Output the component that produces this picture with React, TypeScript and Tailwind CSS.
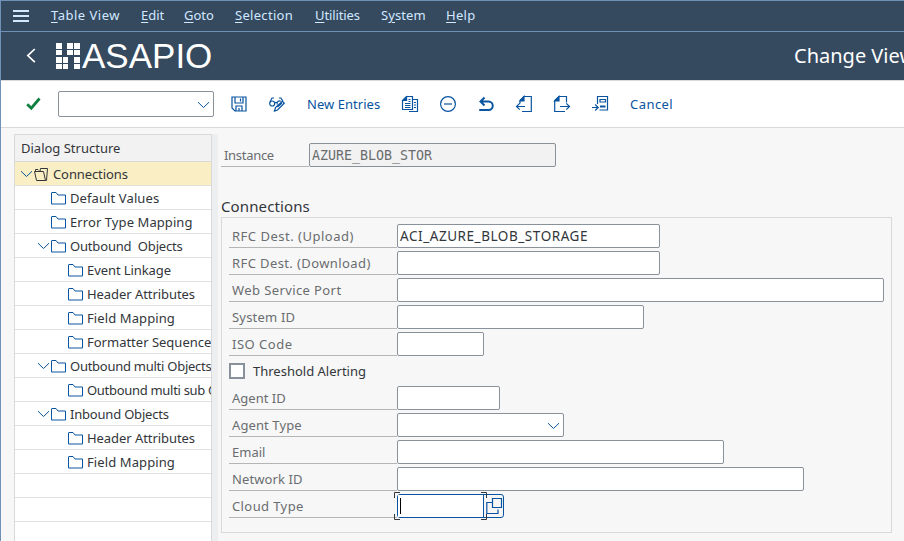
import type { ReactNode } from 'react'

interface MenuItem {
  key: string
  before?: string
  rest: string
  className: string
}

interface TreeRow {
  label: string
  className?: string
  level: 'root' | 'group' | 'child' | 'leaf'
}

interface Field {
  label: string
  labelClass: string
  inputClass: string
  value?: string
}

const menuItems: MenuItem[] = [
  { key: 'T', rest: 'able View', className: 'w-[90px] tracking-[0.5px]' },
  { key: 'E', rest: 'dit', className: 'w-[43px]' },
  { key: 'G', rest: 'oto', className: 'w-[51px]' },
  { key: 'S', rest: 'election', className: 'w-[80px] tracking-[0.3px]' },
  { key: 'U', rest: 'tilities', className: 'w-[66px] tracking-[-0.1px]' },
  { before: 'S', key: 'y', rest: 'stem', className: 'w-[65px] tracking-[0.1px]' },
  { key: 'H', rest: 'elp', className: 'w-[40px] tracking-[0.3px]' },
]

const treeRows: TreeRow[] = [
  { label: 'Connections', level: 'root', className: 'tracking-[-0.1px]' },
  { label: 'Default Values', level: 'child', className: 'tracking-[0.1px]' },
  { label: 'Error Type Mapping', level: 'child', className: 'tracking-[0.08px]' },
  { label: 'Outbound  Objects', level: 'group', className: 'tracking-[-0.17px]' },
  { label: 'Event Linkage', level: 'leaf', className: 'tracking-[-0.08px]' },
  { label: 'Header Attributes', level: 'leaf', className: 'tracking-[-0.06px]' },
  { label: 'Field Mapping', level: 'leaf', className: 'tracking-[0.1px]' },
  { label: 'Formatter Sequence', level: 'leaf' },
  { label: 'Outbound multi Objects', level: 'group', className: 'tracking-[-0.26px]' },
  { label: 'Outbound multi sub Objects', level: 'leaf', className: 'tracking-[-0.3px]' },
  { label: 'Inbound Objects', level: 'group', className: 'tracking-[-0.2px]' },
  { label: 'Header Attributes', level: 'leaf', className: 'tracking-[-0.06px]' },
  { label: 'Field Mapping', level: 'leaf', className: 'tracking-[0.1px]' },
]

const upperFields: Field[] = [
  { label: 'RFC Dest. (Upload)', labelClass: 'tracking-[0.5px]', inputClass: 'w-[263px]', value: 'ACI_AZURE_BLOB_STORAGE' },
  { label: 'RFC Dest. (Download)', labelClass: 'tracking-[0.4px]', inputClass: 'w-[263px]' },
  { label: 'Web Service Port', labelClass: 'tracking-[0.4px]', inputClass: 'w-[487px]' },
  { label: 'System ID', labelClass: 'tracking-[0.2px]', inputClass: 'w-[247px]' },
  { label: 'ISO Code', labelClass: 'tracking-[0.5px]', inputClass: 'w-[87px]' },
]

const indent = {
  root: 'pl-[5px]',
  group: 'pl-[22px]',
  child: 'pl-[36px]',
  leaf: 'pl-[53px]',
}

function Chevron({ className = '' }: { className?: string }) {
  return (
    <svg className={`shrink-0 ${className}`} width="14" height="8" viewBox="0 0 14 8" fill="none" stroke="#0854a0">
      <path d="M1 1.200 6.500 6.500 12 1.200" />
    </svg>
  )
}

function Folder() {
  return (
    <svg className="shrink-0" width="16" height="14" viewBox="0 0 16 14" fill="none" stroke="#0854a0">
      <path d="M.5 13V2Q.5 1.5 1 1.5H5l2 2.500h7.500v9z" />
    </svg>
  )
}

function OpenFolder() {
  return (
    <svg className="shrink-0" width="16" height="14" viewBox="0 0 16 14" fill="none" stroke="#32363a">
      <path d="M2.500 13.500.500 4.500H9.500L11.500 13.500zM1.500 4.500v-2H4l1 1M6 4.500l.500-3h7L12.500 13.500h-1" />
    </svg>
  )
}

function ToolIcon({ children, className = 'w-[38px]' }: { children: ReactNode; className?: string }) {
  return (
    <button className={`shrink-0 ${className}`}>
      <svg width="18" height="18" viewBox="0 0 18 18" fill="none" stroke="#0854a0" strokeWidth="1.2">
        {children}
      </svg>
    </button>
  )
}

function FormRow({ label, labelClass = '', children }: { label: string; labelClass?: string; children: ReactNode }) {
  return (
    <div className="flex h-6">
      <label className="w-[168px] shrink-0 border-b border-[#b5b5b5] pl-[3px] leading-6 text-[#6a6d70]">
        <span className={labelClass}>{label}</span>
      </label>
      {children}
    </div>
  )
}

function TextBox({ className, value }: { className: string; value?: string }) {
  return (
    <div className={`h-6 shrink-0 rounded-[2px] border border-[#89919a] bg-white pl-[2px] leading-[22px] ${className}`}>
      {value && <span className="text-[13.5px] tracking-[0.56px]">{value}</span>}
    </div>
  )
}

function Logo() {
  return (
    <div className="flex h-[48px]">
      <svg className="mt-[11px]" width="26" height="27" viewBox="0 0 26 27" fill="#fff">
        <path d="M0 0h6v6H0zM11 0h6v6h-6zM18 0h6v6h-6zM0 7h6v5H0zM11 7h6v5h-6zM18 7h6v5h-6zM0 14h6v6H0zM7 14h5v6H7zM18 14h6v6h-6zM0 21h6v5H0zM7 21h5v5H7zM18 21h6v5h-6z" />
      </svg>
      <span className="font-['Liberation_Sans',sans-serif] text-[35px] leading-[48px] text-white">ASAPIO</span>
    </div>
  )
}

function Toolbar() {
  return (
    <div className="flex h-[47px] items-center border-b border-[#d9d9d9] bg-white pl-[25px] text-[#0854a0]">
      <svg width="15" height="14" viewBox="0 0 15 14" fill="none" stroke="#107e3e" strokeWidth="2.8">
        <path d="M1.200 7.200 5.300 11.200 13.500 1.500" />
      </svg>
      <div className="ml-[17px] mr-[16px] flex h-[26px] w-[156px] shrink-0 items-center justify-end rounded-[2px] border border-[#89919a] pr-[2px]">
        <Chevron className="mt-[2px]" />
      </div>
      <ToolIcon>
        <path d="M2 2h14v14H5l-3-3zM5 2v6h8V2M6 16v-5h6v5M9 13v3M10.5 3.5v3" />
      </ToolIcon>
      <ToolIcon className="w-[39px]">
        <circle cx="4.200" cy="8.500" r="2.500" />
        <path d="M6.700 8q1-1.300 2.500-.300M1.800 7.500 4 3h2M15 6.500 13 3h-2M9.300 9.500a2.500 2.500 0 0 1 3.500-3.300M6.500 16l1-3.500 6.800-6.200 2 2L9.500 15zM9.500 12l4.500-4" />
      </ToolIcon>
      <span className="w-[94px] shrink-0 whitespace-nowrap tracking-[0.04px]">New Entries</span>
      <ToolIcon>
        <path d="M1.500 5.500v9h10v-13h-6zM5.500 1.500v4h-4M4 8.500h5.500M4 10.500h5.500M4 12.500h5.500M7.500 4.500h2M7.500 6.500h2M11.500 4.500h5v12H8M13 7.500h2M13 10h2M13 12.500h2" />
        <path d="M2 5.500 5.500 2v3.500z" fill="#0854a0" />
      </ToolIcon>
      <ToolIcon>
        <circle cx="9" cy="9" r="7.400" />
        <path d="M5 9h8" />
      </ToolIcon>
      <ToolIcon>
        <path strokeWidth="2" d="M7.500 2.500 3.500 6.500l4 4M3.500 6.500h8a4.100 4.100 0 0 1 0 8.500H2.200" />
      </ToolIcon>
      <ToolIcon>
        <path d="M5 5.500 9 1.500h7.300v15H7M5 5.500v3M1.500 11.500H10M4.700 8.300 1.500 11.500l3.200 3.200" />
        <path d="M5 6 9 1.500V6z" fill="#0854a0" />
      </ToolIcon>
      <ToolIcon>
        <path d="M13.500 7.500v-6H6L1.700 5.500v11H12M7 11.500h9.500M13.300 8.300l3.200 3.200-3.200 3.200" />
        <path d="M1.700 6 6 1.500V6z" fill="#0854a0" />
      </ToolIcon>
      <ToolIcon className="w-[39px]">
        <path d="M6.500 9V1.500h10v13.500h-8M9 4.500h5.500v2.500H9zM1 12.500h6M4.200 9.500l3 3-3 3" />
        <path d="M9 11.500h5.500" strokeWidth="2" />
      </ToolIcon>
      <span className="tracking-[0.45px]">Cancel</span>
    </div>
  )
}

function DialogStructure() {
  return (
    <aside className="mt-[6px] w-[198px] shrink-0 overflow-hidden border-x border-t border-[#d9d9d9] bg-white text-[#32363a]">
      <div className="h-[27px] border-b border-[#d9d9d9] bg-[#f2f2f2] pl-[6px] leading-[27px]">
        <span>Dialog Structure</span>
      </div>
      {treeRows.map((row, i) => (
        <div
          key={i}
          className={`flex h-6 items-center overflow-hidden whitespace-pre border-b border-[#e0e0e0] ${indent[row.level]} ${row.level === 'root' ? 'bg-[#f9eec4]' : ''}`}
        >
          {(row.level === 'root' || row.level === 'group') && <Chevron />}
          {row.level === 'root' ? <OpenFolder /> : <Folder />}
          <span className={`ml-[3px] ${row.className ?? ''}`}>{row.label}</span>
        </div>
      ))}
      <div className="h-6 border-b border-[#e0e0e0]" />
      <div className="h-6 border-b border-[#e0e0e0]" />
    </aside>
  )
}

function CloudTypeInput() {
  return (
    <div className="relative flex h-6 w-[107px] rounded-[3px] border border-[#0854a0] bg-[#f7f7f7]">
      <div className="flex w-[86px] items-center border-r border-[#0854a0] bg-white pl-[2px]">
        <span className="h-4 w-px bg-black" />
      </div>
      <svg className="ml-[2px] mt-[2px]" width="17" height="18" viewBox="0 0 17 18" fill="none" stroke="#0854a0" strokeWidth="1.2">
        <path d="M6.500 1.500h9v9h-9zM6.500 5.500H.800v11H12v-4" />
      </svg>
      <svg className="absolute -left-[4px] -top-[3px]" width="94" height="28" viewBox="0 0 94 28" fill="none" stroke="#32363a">
        <path d="M6 .5H.5V6M87 .5h5.500V6M6 27.500H.5V22M87 27.500h5.500V22" />
      </svg>
    </div>
  )
}

export default function App() {
  return (
    <div className="flex h-[541px] w-[904px] flex-col overflow-hidden border-l border-t border-[#6e91b5] bg-[#f7f7f7] font-['Noto_Sans',sans-serif] text-[13px] leading-5">
      <nav className="flex h-[31px] shrink-0 items-center border-b border-[#6e91b5] bg-[#354a5f] pb-[2px] pl-[12px] text-[#d1e8ff]">
        <svg className="mr-[22px] mt-[2px]" width="16" height="12" viewBox="0 0 16 12" fill="#d1e8ff">
          <path d="M0 0h16v2H0zM0 5h16v2H0zM0 10h16v2H0z" />
        </svg>
        {menuItems.map((item) => (
          <span key={item.key} className={`shrink-0 whitespace-nowrap ${item.className}`}>
            {item.before}
            <span className="underline underline-offset-2">{item.key}</span>
            {item.rest}
          </span>
        ))}
      </nav>
      <header className="flex h-[49px] shrink-0 border-b border-[#d9d9d9] bg-[#354a5f]">
        <svg className="ml-[25px] mr-[18px] mt-[16px]" width="12" height="16" viewBox="0 0 12 16" fill="none" stroke="#fff" strokeWidth="1.7">
          <path d="M8.800 1 1.800 7.600l7 6.600" />
        </svg>
        <Logo />
        <h1 className="ml-auto w-[110px] whitespace-nowrap text-[20px] leading-[48px] text-white">Change View</h1>
      </header>
      <Toolbar />
      <main className="flex min-h-0 flex-1 pl-[13px]">
        <DialogStructure />
        <div className="mt-[6px] w-[6px] shrink-0 bg-[#eceef0]" />
        <section className="pl-[3px] pt-[15px]">
          <div className="flex h-6">
            <label className="w-[88px] border-b border-[#b5b5b5] pl-[3px] leading-6 tracking-[-0.3px] text-[#6a6d70]">Instance</label>
            <div className="h-6 w-[247px] rounded-[2px] border border-[#89919a] bg-[#f2f2f2] pl-[2px] font-['DejaVu_Sans_Mono',monospace] text-[13.3px] leading-[23px] text-[#6a6d70]">
              AZURE_BLOB_STOR
            </div>
          </div>
          <h2 className="mt-[29px] h-[21px] text-[15px] leading-[21px] tracking-[0.12px] text-[#32363a]">Connections</h2>
          <div className="flex h-[316px] w-[671px] flex-col gap-[3px] border border-[#d9d9d9] pl-[7px] pt-[6px] text-[#32363a]">
            {upperFields.map((field) => (
              <FormRow key={field.label} label={field.label} labelClass={field.labelClass}>
                <TextBox className={field.inputClass} value={field.value} />
              </FormRow>
            ))}
            <div className="flex h-6 items-center gap-2">
              <span className="mb-[1px] size-4 border-2 border-[#89919a] bg-white" />
              <span>Threshold Alerting</span>
            </div>
            <FormRow label="Agent ID">
              <TextBox className="w-[103px]" />
            </FormRow>
            <FormRow label="Agent Type" labelClass="tracking-[0.1px]">
              <div className="flex w-[167px] items-center justify-end rounded-[2px] border border-[#89919a] bg-white pr-[2px]">
                <Chevron className="mt-[2px]" />
              </div>
            </FormRow>
            <FormRow label="Email">
              <TextBox className="w-[327px]" />
            </FormRow>
            <FormRow label="Network ID" labelClass="tracking-[0.1px]">
              <TextBox className="w-[407px]" />
            </FormRow>
            <FormRow label="Cloud Type" labelClass="tracking-[0.4px]">
              <CloudTypeInput />
            </FormRow>
          </div>
        </section>
      </main>
    </div>
  )
}
